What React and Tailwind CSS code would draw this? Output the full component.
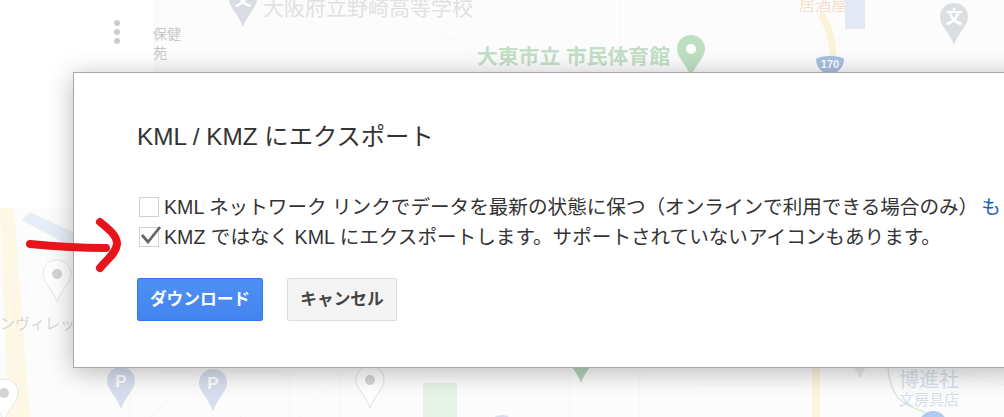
// App.jsx — KML / KMZ export dialog over a faded map

const FONT = "font-['Liberation_Sans','Noto_Sans_CJK_JP',sans-serif]"

function Pin({ x, y, w = 30, h = 44, fill = '#dfe2e6', stroke, dot, label, labelColor = '#fff' }) {
  return (
    <svg className="absolute" style={{ left: x, top: y }} width={w} height={h} viewBox="0 0 30 44">
      <path
        d="M15 1C7 1 1 7 1 15c0 9 9 14 14 28C20 29 29 24 29 15 29 7 23 1 15 1z"
        fill={fill}
        stroke={stroke || 'none'}
      />
      {dot && <circle cx="15" cy="15" r="5" fill={dot} />}
      {label && (
        <text x="15" y="21" textAnchor="middle" fontSize="17" fontWeight="700" fill={labelColor} fontFamily="'Liberation Sans','Noto Sans CJK JP',sans-serif">
          {label}
        </text>
      )}
    </svg>
  )
}

function MapBackdrop() {
  return (
    <div className="absolute inset-0">
      {/* faint street lines and roads */}
      <svg className="absolute inset-0" width="1004" height="417" viewBox="0 0 1004 417" fill="none">
        <rect x="0" y="0" width="154" height="208" fill="#ffffff" />
        <path d="M155 0V72M158 0V72" stroke="#f4f4f4" />
        <path d="M190 38H470V72M420 0C430 30 470 50 490 72M600 0V72M620 0V72M740 40H910V60" stroke="#f9f8f6" />
        <path d="M821 14C828 25 833 38 833 56" stroke="#fbf3d8" strokeWidth="7" />
        <path d="M845 0H865V29H845z" fill="#e3e9f4" />
        <path d="M0 208H14L30 417H8z" fill="#fdf8e6" />
        <path d="M22 220L73 248V232L30 212z" fill="#e6edf6" />
        <path d="M812 367H820V417H812z" fill="#fbf5de" />
        <path d="M888 367C890 395 900 405 925 412" stroke="#d9ead9" strokeWidth="1.5" />
        <path d="M423 383H457V417H423z" fill="#e6f3e6" />
        <path d="M130 372V417M160 372H290V417M340 372V417M570 375V417M640 372V417M700 385H800M960 372L1004 385" stroke="#f5f5f6" />
        <path d="M150 417L200 372M240 417L285 372M300 417L335 380" stroke="#f5f5f7" />
      </svg>

      {/* kebab of the side panel */}
      <div className="absolute left-[114px] top-[20px] flex flex-col gap-[3px]">
        <span className="h-[6px] w-[6px] rounded-full bg-[#cdcdcd]" />
        <span className="h-[6px] w-[6px] rounded-full bg-[#cdcdcd]" />
        <span className="h-[6px] w-[6px] rounded-full bg-[#cdcdcd]" />
      </div>

      <span className="absolute left-[153px] top-[25px] w-[32px] text-[14px] leading-[19px] text-[#c8c8c8]">保健 苑</span>
      <span className="absolute left-[263px] top-[-5px] whitespace-nowrap text-[21px] leading-[26px] text-[#dfe1e3]">大阪府立野崎高等学校</span>
      <span className="absolute left-[477px] top-[44px] whitespace-nowrap text-[20.8px] font-bold leading-[26px] text-[#c3dfc7]">大東市立 市民体育館</span>
      <span className="absolute left-[799px] top-[-4px] whitespace-nowrap text-[16px] leading-[20px] text-[#f6dfcc]">居酒屋</span>
      <span className="absolute left-[0px] top-[314px] whitespace-nowrap text-[15px] leading-[20px] text-[#d8d8d8]">ンヴィレッ</span>
      <span className="absolute left-[899px] top-[368px] whitespace-nowrap text-[20px] leading-[24px] text-[#d6e0ec]">博進社</span>
      <span className="absolute left-[899px] top-[390px] whitespace-nowrap text-[15px] leading-[20px] text-[#d6e0ec]">文房具店</span>

      <Pin x={228} y={-16} fill="#d9dde1" label="文" />
      <Pin x={676} y={34} fill="#bde0c1" dot="#ffffff" />
      <Pin x={939} y={2} fill="#dbdfe2" label="文" />
      <Pin x={42} y={259} fill="#ffffff" stroke="#e6e6e6" dot="#d4d4d4" />
      <Pin x={-11} y={378} fill="#ffffff" stroke="#e6e6e6" dot="#d4d4d4" />
      <Pin x={106} y={366} fill="#d8deed" label="P" />
      <Pin x={198} y={368} fill="#d8deed" label="P" />
      <Pin x={355} y={365} fill="#ffffff" stroke="#e2e2e2" dot="#d4d4d4" />
      <Pin x={566} y={340} fill="#b4d6ba" />
      <Pin x={845} y={336} fill="#e8eaec" />
      <Pin x={487} y={414} fill="#d8deed" />
      <Pin x={918} y={410} fill="#b0caf4" />

      {/* route 170 shield */}
      <svg className="absolute left-[815px] top-[53px]" width="30" height="24" viewBox="0 0 30 24">
        <path d="M1 6C5 2 25 2 29 6c0 8-6 14-14 16C7 20 1 14 1 6z" fill="#a9c0e2" />
        <text x="15" y="15" textAnchor="middle" fontSize="11" fontWeight="700" fill="#fff" fontFamily="'Liberation Sans',sans-serif">170</text>
      </svg>
    </div>
  )
}

function CheckRow({ checked, children }) {
  return (
    <div className="flex h-[30px] items-center">
      <span className="relative h-[20px] w-[20px] shrink-0 border border-[#d0d0d0] bg-white">
        {checked && (
          <svg className="absolute left-[1px] top-[-5px]" width="21" height="21" viewBox="0 0 21 21" fill="none">
            <path d="M1 12L7 19 19 4" stroke="#666666" strokeWidth="2.8" />
          </svg>
        )}
      </span>
      <span className="ml-[5px] whitespace-nowrap text-[19.6px] leading-[30px] text-[#333333]">{children}</span>
    </div>
  )
}

export default function App() {
  return (
    <div className={`relative h-[417px] w-[1004px] overflow-hidden bg-[#fcfcfc] ${FONT}`}>
      <MapBackdrop />

      {/* ── Dialog ── */}
      <div className="absolute left-[73px] top-[72px] flex h-[296px] w-[1060px] flex-col border border-[#a8a8a8] bg-white pl-[63px] shadow-[0_4px_24px_rgba(0,0,0,0.28)]">
        <h1 className="mt-[48px] text-[24.3px] font-normal leading-[32px] text-[#333333]">KML / KMZ にエクスポート</h1>

        <div className="ml-[2px] mt-[39px] flex flex-col">
          <CheckRow>
            KML ネットワーク リンクでデータを最新の状態に保つ（オンラインで利用できる場合のみ）
            <span className="ml-[3px] text-[#1a5fb4]">もっと詳しく</span>
          </CheckRow>
          <CheckRow checked>KMZ ではなく KML にエクスポートします。サポートされていないアイコンもあります。</CheckRow>
        </div>

        <div className="mt-[26px] flex gap-[24px]">
          <button className="h-[43px] w-[126px] rounded-[2px] border border-[#3079ed] bg-gradient-to-b from-[#4d90f5] to-[#4584ee] text-[16.7px] font-bold text-white">
            ダウンロード
          </button>
          <button className="h-[43px] w-[110px] rounded-[2px] border border-[#dcdcdc] bg-[#f4f4f4] text-[16.7px] font-bold text-[#444444]">
            キャンセル
          </button>
        </div>
      </div>

      {/* ── Red hand-drawn arrow ── */}
      <svg className="absolute left-0 top-0" width="130" height="290" viewBox="0 0 130 290" fill="none">
        <path
          d="M30 244C50 246 75 248 106 248M100 222C110 230 117 236 117 244C116 254 106 260 100 268"
          stroke="#e8141c"
          strokeWidth="8"
          strokeLinecap="round"
          strokeLinejoin="round"
        />
      </svg>
    </div>
  )
}
